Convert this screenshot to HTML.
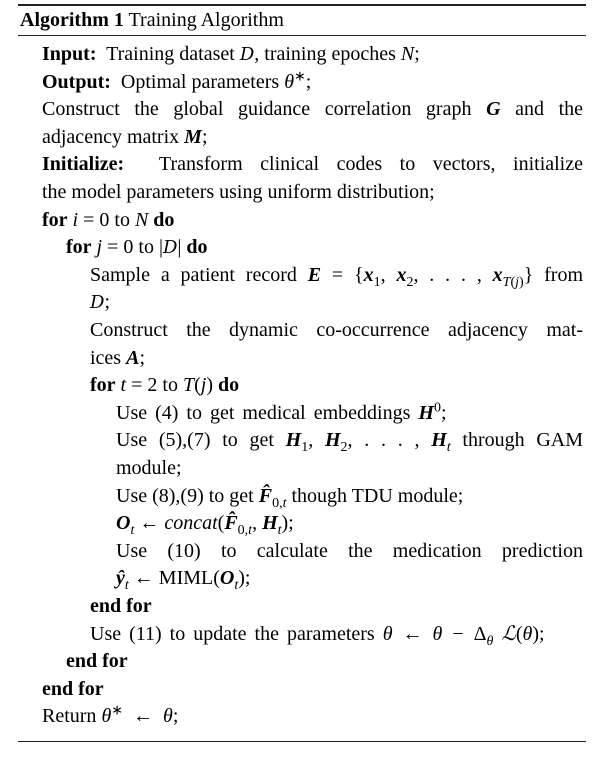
<!DOCTYPE html>
<html><head><meta charset="utf-8"><style>
html,body{margin:0;padding:0;background:#fff;}
body{width:608px;height:758px;position:relative;overflow:hidden;font-family:"Liberation Serif",serif;color:#000;font-size:20px;}
.r{position:absolute;left:18px;width:568px;background:#222;}
.l{position:absolute;height:26px;line-height:26px;white-space:nowrap;}
.j{text-align:justify;text-align-last:justify;white-space:normal;}
b{font-weight:bold;}
i{font-style:italic;}
.bi{font-weight:bold;font-style:italic;}
sub,sup{font-size:70%;line-height:0;}
.d{font-style:italic;font-family:"DejaVu Serif",serif;font-size:90%;}
.o{padding:0 5px;}
.w{padding:0 10px;}
</style></head><body>
<div class="r" style="top:4px;height:2px;"></div>
<div class="l" style="left:20px;top:7px;"><b>Algorithm 1</b> Training Algorithm</div>
<div class="r" style="top:35px;height:1px;"></div>

<div class="l" style="left:42px;top:41px;"><b>Input:</b>&nbsp; Training dataset <span class="d">D</span>, training epoches <i>N</i>;</div>
<div class="l" style="left:42px;top:69px;"><b>Output:</b>&nbsp; Optimal parameters <i>θ</i><sup>∗</sup>;</div>
<div class="l j" style="left:42px;width:541px;top:96px;">Construct the global guidance correlation graph <span class="bi">G</span> and the</div>
<div class="l" style="left:42px;top:124px;">adjacency matrix <span class="bi">M</span>;</div>
<div class="l j" style="left:42px;width:541px;top:151px;"><b>Initialize:</b>&nbsp; Transform clinical codes to vectors, initialize</div>
<div class="l" style="left:42px;top:179px;">the model parameters using uniform distribution;</div>
<div class="l" style="left:42px;top:207px;"><b>for</b> <i>i</i><span class="o">=</span>0 to <i>N</i> <b>do</b></div>
<div class="l" style="left:66px;top:234px;"><b>for</b> <i>j</i><span class="o">=</span>0 to |<span class="d">D</span>| <b>do</b></div>
<div class="l j" style="left:90px;width:493px;top:262px;">Sample a patient record <span class="bi">E</span>&nbsp;=&nbsp;{<span class="bi">x</span><sub>1</sub>,&nbsp;<span class="bi">x</span><sub>2</sub>,&nbsp;.&nbsp;.&nbsp;.&nbsp;,&nbsp;<span class="bi">x</span><sub><i>T</i>(<i>j</i>)</sub>} from</div>
<div class="l" style="left:90px;top:289px;"><span class="d">D</span>;</div>
<div class="l j" style="left:90px;width:493px;top:317px;">Construct the dynamic co-occurrence adjacency mat-</div>
<div class="l" style="left:90px;top:345px;">ices <span class="bi">A</span>;</div>
<div class="l" style="left:90px;top:372px;"><b>for</b> <i>t</i><span class="o">=</span>2 to <i>T</i>(<i>j</i>) <b>do</b></div>
<div class="l" style="left:116px;top:400px;word-spacing:3px;">Use (4) to get medical embeddings <span class="bi">H</span><sup>0</sup>;</div>
<div class="l j" style="left:116px;width:467px;top:427px;">Use (5),(7) to get <span class="bi">H</span><sub>1</sub>,&nbsp;<span class="bi">H</span><sub>2</sub>,&nbsp;.&nbsp;.&nbsp;.&nbsp;,&nbsp;<span class="bi">H</span><sub><i>t</i></sub> through GAM</div>
<div class="l" style="left:116px;top:455px;">module;</div>
<div class="l" style="left:116px;top:483px;">Use (8),(9) to get <span class="bi">F̂</span><sub>0,<i>t</i></sub> though TDU module;</div>
<div class="l" style="left:116px;top:510px;"><span class="bi">O</span><sub><i>t</i></sub><span class="o">←</span><i>concat</i>(<span class="bi">F̂</span><sub>0,<i>t</i></sub>, <span class="bi">H</span><sub><i>t</i></sub>);</div>
<div class="l j" style="left:116px;width:467px;top:538px;">Use (10) to calculate the medication prediction</div>
<div class="l" style="left:116px;top:565px;"><span class="bi">ŷ</span><sub><i>t</i></sub><span class="o">←</span>MIML(<span class="bi">O</span><sub><i>t</i></sub>);</div>
<div class="l" style="left:90px;top:593px;"><b>end for</b></div>
<div class="l" style="left:90px;top:621px;word-spacing:3px;">Use (11) to update the parameters <i>θ</i><span class="w">←</span><i>θ</i><span class="w">−</span>Δ<sub><i>θ</i></sub>&nbsp;<i>ℒ</i>(<i>θ</i>);</div>
<div class="l" style="left:66px;top:648px;"><b>end for</b></div>
<div class="l" style="left:42px;top:676px;"><b>end for</b></div>
<div class="l" style="left:42px;top:703px;">Return <i>θ</i><sup>∗</sup><span class="w">←</span><i>θ</i>;</div>
<div class="r" style="top:741px;height:1px;"></div>
</body></html>
